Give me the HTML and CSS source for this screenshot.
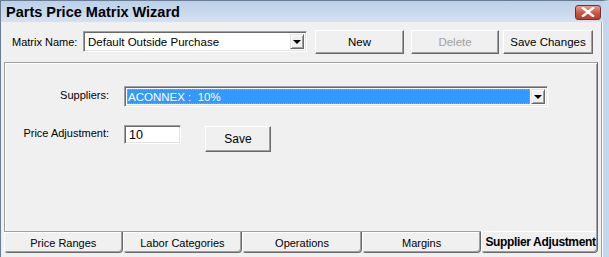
FILE: index.html
```html
<!DOCTYPE html>
<html>
<head>
<meta charset="utf-8">
<link rel="stylesheet" href="styles.css">
</head>
<body>
<div class="window">
  <div class="titlebar">
    <span class="title">Parts Price Matrix Wizard</span>
    <span class="close"><svg width="14" height="10" viewBox="0 0 14 10"><path d="M2 1 L12 9 M12 1 L2 9" stroke="#fff" stroke-width="2.4" stroke-linecap="square"/></svg></span>
  </div>
  <div class="body">
    <div class="toolbar">
      <span class="lbl">Matrix Name:</span>
      <div class="combo combo-matrix">
        <span class="combo-text">Default Outside Purchase</span>
        <span class="drop"><i></i></span>
      </div>
      <button class="btn btn-new">New</button>
      <button class="btn btn-del" disabled>Delete</button>
      <button class="btn btn-save">Save Changes</button>
    </div>
    <div class="panel">
      <div class="row row-sup">
        <span class="flabel">Suppliers:</span>
        <div class="combo combo-sup">
          <span class="combo-text sel"><span class="focus">ACONNEX :&nbsp; 10%</span></span>
          <span class="drop"><i></i></span>
        </div>
      </div>
      <div class="row row-adj">
        <span class="flabel">Price Adjustment:</span>
        <div class="input">10</div>
        <button class="btn btn-small">Save</button>
      </div>
    </div>
    <div class="tabs">
      <div class="tab">Price Ranges</div>
      <div class="tab">Labor Categories</div>
      <div class="tab">Operations</div>
      <div class="tab">Margins</div>
      <div class="tab active">Supplier Adjustment</div>
    </div>
  </div>
</div>
</body>
</html>
```

FILE: styles.css
```css
html, body {
  margin: 0;
  padding: 0;
}
body {
  width: 609px;
  height: 257px;
  overflow: hidden;
  background: #f0f0f0;
  font-family: "Liberation Sans", Arial, sans-serif;
  font-size: 11px;
  color: #000;
}
.window {
  width: 609px;
  height: 257px;
  box-sizing: border-box;
  border-left: 1px solid #6b7d94;
  border-top: 1px solid #6b7d94;
  border-right: 6px solid #c5d7ec;
  background: #f0f0f0;
  display: flex;
  flex-direction: column;
}
.titlebar {
  height: 21px;
  background: linear-gradient(#bcd0e8, #d3e1f2);
  display: flex;
  align-items: center;
  padding-left: 5px;
  padding-right: 2px;
}
.title {
  font-weight: bold;
  font-size: 14.5px;
}
.close {
  margin-left: auto;
  width: 24px;
  height: 13px;
  border: 1px solid #7a2e2a;
  border-radius: 3px;
  background: linear-gradient(#e8a08e, #c9533f 55%, #b8402e);
  display: flex;
  align-items: center;
  justify-content: center;
  margin-top: 1px;
}
.body {
  flex: 1;
  display: flex;
  flex-direction: column;
  border-right: 1px solid #ffffff;
  box-shadow: inset -1px 0 0 #a0a0a0;
}
.toolbar {
  height: 40px;
  display: flex;
  align-items: center;
  padding-left: 11px;
  box-sizing: border-box;
  padding-bottom: 1px;
}
.lbl {
  width: 71px;
}
.combo {
  display: flex;
  align-items: stretch;
  background: #fff;
  box-sizing: border-box;
  border-top: 1px solid #a0a0a0;
  border-left: 1px solid #a0a0a0;
  border-right: 1px solid #fff;
  border-bottom: 1px solid #fff;
  box-shadow: inset 1px 1px 0 #696969, inset -1px -1px 0 #e3e3e3;
  padding: 2px;
}
.combo-matrix {
  width: 224px;
  height: 21px;
  font-size: 11.5px;
}
.combo-text {
  flex: 1;
  display: flex;
  align-items: center;
  padding-left: 2px;
  white-space: nowrap;
}
.drop {
  width: 14px;
  background: #f0f0f0;
  box-sizing: border-box;
  border-top: 1px solid #e3e3e3;
  border-left: 1px solid #e3e3e3;
  border-right: 1px solid #696969;
  border-bottom: 1px solid #696969;
  box-shadow: inset 1px 1px 0 #fff, inset -1px -1px 0 #a0a0a0;
  display: flex;
  align-items: center;
  justify-content: center;
}
.drop i {
  width: 0;
  height: 0;
  border-left: 4px solid transparent;
  border-right: 4px solid transparent;
  border-top: 4px solid #000;
  margin-top: 1px;
}
.btn {
  font-family: "Liberation Sans", Arial, sans-serif;
  font-size: 11.5px;
  color: #000;
  background: #f0f0f0;
  box-sizing: border-box;
  border-top: 1px solid #fff;
  border-left: 1px solid #fff;
  border-right: 1px solid #696969;
  border-bottom: 1px solid #696969;
  box-shadow: inset -1px -1px 0 #a0a0a0;
  padding: 0;
  height: 24px;
}
.btn:disabled {
  color: #a0a0a0;
}
.btn-new {
  width: 89px;
  margin-left: 8px;
}
.btn-del {
  width: 88px;
  margin-left: 7px;
}
.btn-save {
  width: 90px;
  margin-left: 4px;
}
.panel {
  flex: 1;
  margin-left: 3px;
  margin-right: 4px;
  box-sizing: border-box;
  border-top: 1px solid #a0a0a0;
  border-left: 1px solid #a0a0a0;
  border-right: 1px solid #696969;
  box-shadow: inset 1px 1px 0 #fff, inset -1px 0 0 #a0a0a0;
  padding-top: 23px;
}
.row {
  display: flex;
  align-items: center;
}
.flabel {
  width: 104px;
  text-align: right;
  margin-right: 15px;
}
.row-sup .flabel {
  margin-top: -4px;
}
.combo-sup {
  width: 424px;
  height: 21px;
  font-size: 11.5px;
}
.combo-sup .combo-text {
  padding-left: 0;
  margin-right: 1px;
}
.sel {
  background: #3399ff;
  color: #fff;
}
.focus {
  display: flex;
  align-items: center;
  flex: 1;
  align-self: stretch;
  outline: 1px dotted #e8a000;
  outline-offset: -1px;
  padding-left: 1px;
}
.row-adj {
  margin-top: 18px;
  align-items: flex-start;
}
.row-adj .flabel {
  margin-top: 2px;
}
.input {
  width: 57px;
  height: 19px;
  box-sizing: border-box;
  background: #fff;
  border-top: 1px solid #a0a0a0;
  border-left: 1px solid #a0a0a0;
  border-right: 1px solid #fff;
  border-bottom: 1px solid #fff;
  box-shadow: inset 1px 1px 0 #696969, inset -1px -1px 0 #e3e3e3;
  padding-left: 4px;
  display: flex;
  align-items: center;
  font-size: 12.5px;
}
.btn-small {
  width: 66px;
  height: 26px;
  margin-left: 24px;
  margin-top: 1px;
  font-size: 12px;
}
.tabs {
  height: 21px;
  display: flex;
  margin-left: 3px;
  margin-right: 4px;
  margin-bottom: 4px;
  border-top: 1px solid #a0a0a0;
}
.tab {
  width: 120px;
  box-sizing: border-box;
  border-left: 1px solid #fff;
  border-right: 1px solid #696969;
  border-bottom: 1px solid #696969;
  box-shadow: inset -1px -1px 0 #a0a0a0, inset 0 1px 0 #fff;
  border-radius: 0 0 4px 4px;
  display: flex;
  align-items: center;
  justify-content: center;
  font-size: 11px;
  padding-top: 1px;
}
.tab:first-child {
  width: 119px;
}
.tab.active {
  width: 117px;
  font-weight: bold;
  font-size: 12px;
  letter-spacing: -0.35px;
  margin-top: -1px;
  background: #f0f0f0;
  justify-content: flex-start;
  padding-left: 3px;
  white-space: nowrap;
}
```
